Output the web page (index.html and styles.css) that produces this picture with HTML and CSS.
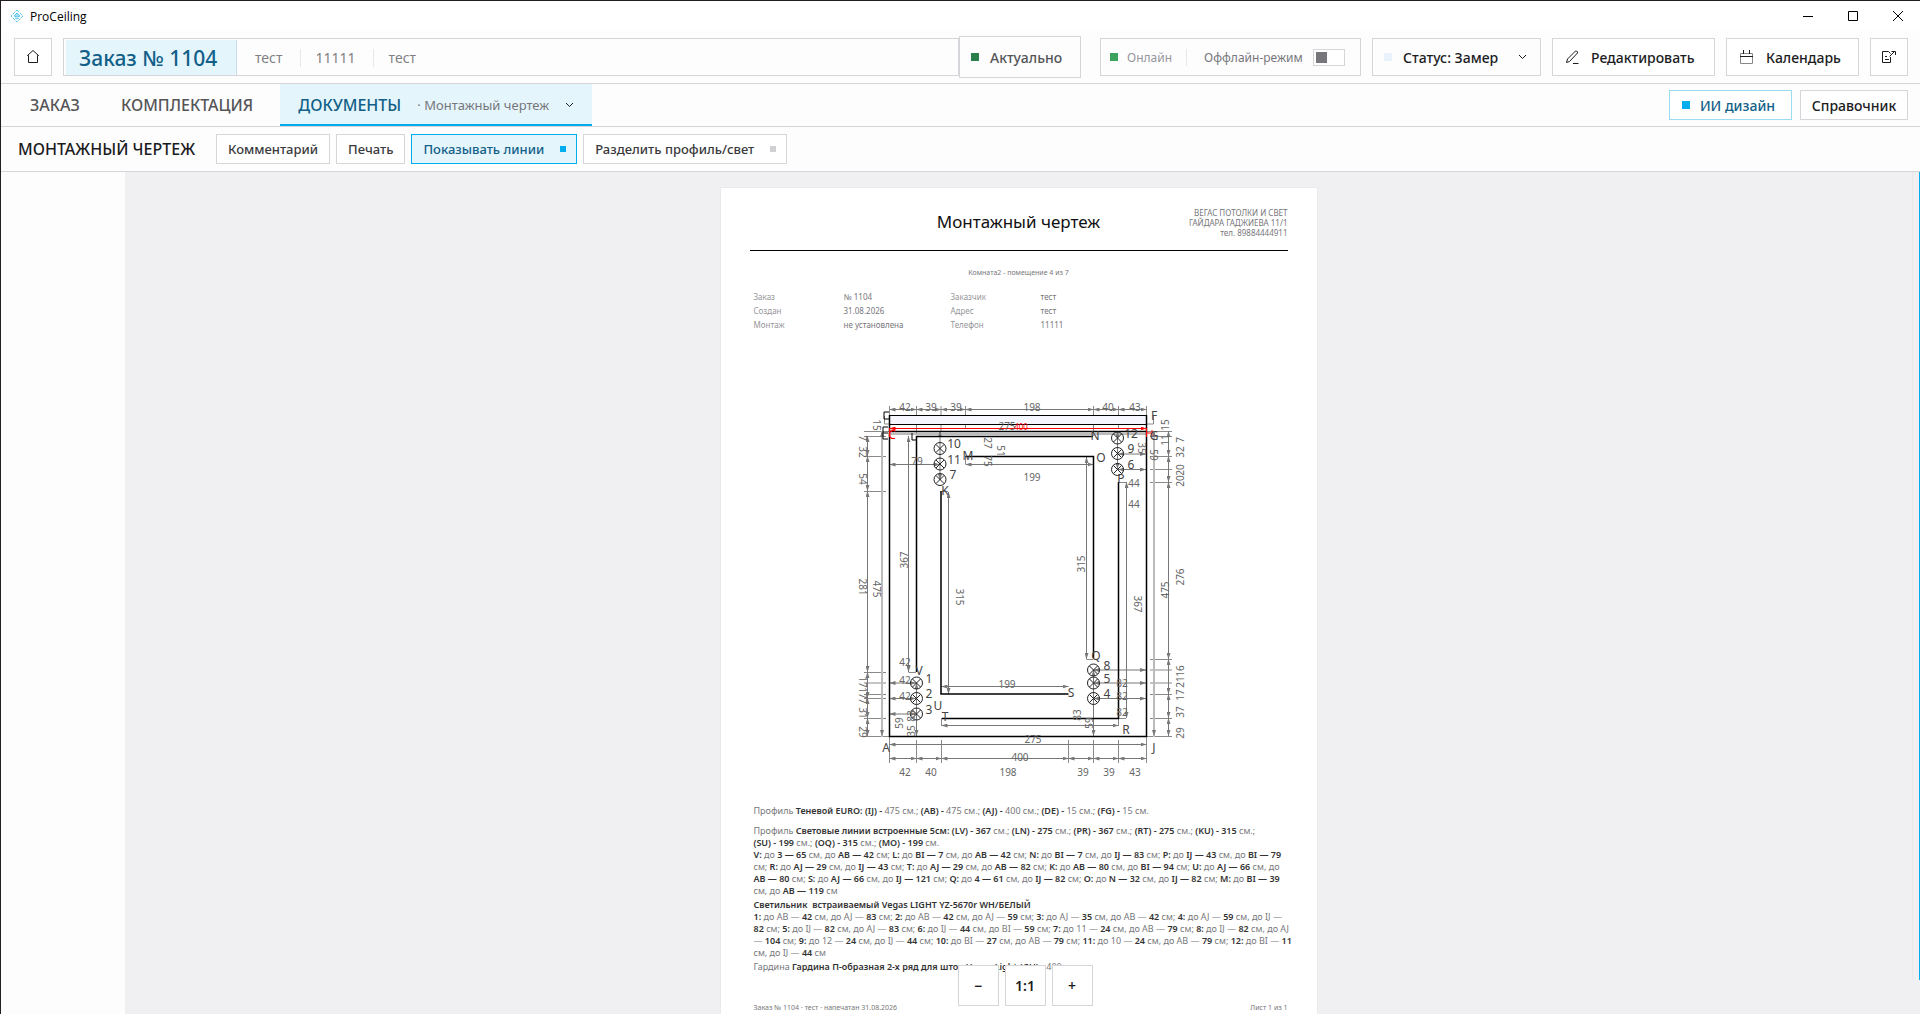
FILE: index.html
```html
<!DOCTYPE html>
<html lang="ru">
<head>
  <meta charset="UTF-8">
  <meta name="viewport" content="width=device-width, initial-scale=1.0">
  <title>ProCeiling</title>
  <link rel="stylesheet" href="styles.css">
</head>
<body>
  <div class="titlebar">
    <svg class="logo" width="14" height="14" viewBox="0 0 14 14">
      <path d="M7 1 L13 7 L7 13 L1 7 Z" stroke-dasharray="3 1"/>
      <path d="M4 7 L7 4 L10 7 L7 8 Z" fill="#a5e0f6"/>
      <path d="M5 9 L7 10 L9 9"/>
    </svg>
    <span class="app-name">ProCeiling</span>
    <div class="window-buttons">
      <button aria-label="Свернуть"><svg width="12" height="12" viewBox="0 0 12 12"><path d="M1 6.5H11"/></svg></button>
      <button aria-label="Развернуть"><svg width="12" height="12" viewBox="0 0 12 12"><path d="M1.5 1.5H10.5V10.5H1.5Z"/></svg></button>
      <button aria-label="Закрыть"><svg width="12" height="12" viewBox="0 0 12 12"><path d="M1 1L11 11M11 1L1 11"/></svg></button>
    </div>
  </div>

  <header class="topbar">
    <button class="btn square home" aria-label="Главная">
      <svg width="14" height="16" viewBox="0 0 14 16"><path d="M2.5 13.5V6.5H1.5L7 1.5L12.5 6.5H11.5V13.5Z"/></svg>
    </button>
    <div class="order">
      <strong>Заказ № 1104</strong>
      <span>тест</span>
      <span>11111</span>
      <span>тест</span>
    </div>
    <div class="actual"><i class="dot dark-green"></i>Актуально</div>
    <div class="online">
      <i class="dot green"></i>
      <span class="net">Онлайн</span>
      <label for="offline">Оффлайн-режим</label>
      <input type="checkbox" id="offline" class="switch">
    </div>
    <div class="status">
      <i class="dot pale"></i>
      <select aria-label="Статус"><option>Статус: Замер</option></select>
      <svg class="chevron" width="9" height="6" viewBox="0 0 9 6"><path d="M1 1L4.5 4.5L8 1"/></svg>
    </div>
    <button class="btn edit">
      <svg width="14" height="15" viewBox="0 0 14 15"><path d="M1.5 12.5L2.5 9L10.5 1H11.5L12.5 2V3L4.5 11.5L1.5 12.5M8 13.5H13.5"/></svg>
      Редактировать
    </button>
    <button class="btn calendar">
      <svg width="15" height="15" viewBox="0 0 15 15"><path d="M1.5 3.5H13.5V13.5H1.5Z" stroke="#888"/><path d="M1 6.5H14M4.5 0V4M10.5 0V4"/></svg>
      Календарь
    </button>
    <button class="btn square" aria-label="Экспорт">
      <svg width="16" height="14" viewBox="0 0 16 14"><path d="M9.5 7V12.5H1.5V1.5H7.5L9.5 3.5M4 6.5H6M4 9.5H8M8.5 6.5L14 1M10.5 1.5H14.5V5"/></svg>
    </button>
  </header>

  <nav class="tabs">
    <a href="#order" class="tab">ЗАКАЗ</a>
    <a href="#kit" class="tab">КОМПЛЕКТАЦИЯ</a>
    <div class="tab active">
      <a href="#docs">ДОКУМЕНТЫ</a>
      <select aria-label="Документ"><option>· Монтажный чертеж</option></select>
      <svg class="chevron" width="9" height="6" viewBox="0 0 9 6"><path d="M1 1L4.5 4.5L8 1"/></svg>
    </div>
    <button class="btn small ai"><i class="dot cyan"></i>ИИ дизайн</button>
    <button class="btn small guide">Справочник</button>
  </nav>

  <div class="toolbar">
    <h1>МОНТАЖНЫЙ ЧЕРТЕЖ</h1>
    <button class="btn small">Комментарий</button>
    <button class="btn small">Печать</button>
    <button class="btn small on">Показывать линии<i class="mark cyan"></i></button>
    <button class="btn small">Разделить профиль/свет<i class="mark"></i></button>
  </div>

  <main class="workspace">
    <aside class="side"></aside>
    <div class="canvas">
      <article class="sheet">
        <div class="sheet-head">
          <h2>Монтажный чертеж</h2>
          <address>ВЕГАС ПОТОЛКИ И СВЕТ<br>ГАЙДАРА ГАДЖИЕВА 11/1<br>тел. 89884444911</address>
        </div>
        <p class="room">Комната2 - помещение 4 из 7</p>
        <table class="info">
          <tr><th>Заказ</th><td>№ 1104</td><th>Заказчик</th><td>тест</td></tr>
          <tr><th>Создан</th><td>31.08.2026</td><th>Адрес</th><td>тест</td></tr>
          <tr><th>Монтаж</th><td>не установлена</td><th>Телефон</th><td>11111</td></tr>
        </table>

        <svg class="plan" viewBox="839 391 360 400">
          <defs>
            <marker id="arrow" viewBox="0 0 6 4" refX="6" refY="2" markerWidth="6" markerHeight="4" markerUnits="userSpaceOnUse" orient="auto-start-reverse"><path d="M0 0L6 2L0 4Z" fill="#777"/></marker>
            <marker id="arrow-red" viewBox="0 0 6 4" refX="6" refY="2" markerWidth="6" markerHeight="4" markerUnits="userSpaceOnUse" orient="auto-start-reverse"><path d="M0 0L6 2L0 4Z" fill="#f00"/></marker>
            <g id="lamp"><circle r="6"/><path d="M-4 -4L4 4M4 -4L-4 4"/></g>
          </defs>

          <!-- extension lines -->
          <path class="tick" d="M889.5 406V425M916.5 406V434M941 406V432M965.5 406V428M1093.5 406V436M1118.5 406V428M1146.5 406V425
            M889.5 737V763M916.5 740V763M941.5 740V763M1068.5 740V763M1093.5 740V763M1118.5 740V763M1146.5 737V763
            M864 431.5H890M864 436.5H886M864 456.5H886M864 491.5H886M864 672.5H886M864 683H886M864 694.5H886M864 698.5H886M864 718.5H886M864 736.5H889
            M1147 431.5H1172M1150 436.5H1172M1150 456.5H1172M1150 469.5H1172M1150 482.5H1172M1150 659.5H1172M1150 670H1172M1150 683H1172M1150 694.5H1172M1150 718.5H1172M1147 736.5H1172
            M908.5 672.5H916M941 491.5H948M1086.5 659.5H1093M1118.5 482.5H1126M1118 718.5H1126M941.5 718V726M965.5 456V464M1118.5 718V726"/>
          <path class="pale-line" d="M882 431V737M1154 431V737M889 434H1147"/>
          <path class="tick" d="M889 424H884.5V416M1147 424H1153.5V416"/>

          <!-- dimension lines -->
          <g class="dim">
            <line x1="889.5" y1="409.5" x2="916.5" y2="409.5"/><line x1="916.5" y1="409.5" x2="941" y2="409.5"/>
            <line x1="941" y1="409.5" x2="965.5" y2="409.5"/><line x1="965.5" y1="409.5" x2="1093.5" y2="409.5"/>
            <line x1="1093.5" y1="409.5" x2="1118.5" y2="409.5"/><line x1="1118.5" y1="409.5" x2="1146.5" y2="409.5"/>
            <line x1="889.5" y1="758.5" x2="916.5" y2="758.5"/><line x1="916.5" y1="758.5" x2="941.5" y2="758.5"/>
            <line x1="941.5" y1="758.5" x2="1068.5" y2="758.5"/><line x1="1068.5" y1="758.5" x2="1093.5" y2="758.5"/>
            <line x1="1093.5" y1="758.5" x2="1118.5" y2="758.5"/><line x1="1118.5" y1="758.5" x2="1146.5" y2="758.5"/>
            <line x1="889.5" y1="744.5" x2="1146.5" y2="744.5"/><line x1="941.5" y1="725.5" x2="1118.5" y2="725.5"/>
            <line x1="941.5" y1="686.5" x2="1068.5" y2="686.5"/><line x1="965.5" y1="464.5" x2="1093.5" y2="464.5"/>
            <line x1="889.5" y1="464.5" x2="940" y2="464.5"/>
            <line x1="867.5" y1="436" x2="867.5" y2="456"/><line x1="867.5" y1="456" x2="867.5" y2="491"/>
            <line x1="867.5" y1="491" x2="867.5" y2="672"/><line x1="867.5" y1="672" x2="867.5" y2="698"/>
            <line x1="867.5" y1="698" x2="867.5" y2="718"/><line x1="867.5" y1="718" x2="867.5" y2="736"/>
            <line x1="1168.5" y1="431" x2="1168.5" y2="456"/><line x1="1168.5" y1="456" x2="1168.5" y2="482"/>
            <line x1="1168.5" y1="482" x2="1168.5" y2="659"/><line x1="1168.5" y1="659" x2="1168.5" y2="694"/>
            <line x1="1168.5" y1="694" x2="1168.5" y2="718"/><line x1="1168.5" y1="718" x2="1168.5" y2="736"/>
            <line x1="908.5" y1="436" x2="908.5" y2="672"/><line x1="948.5" y1="492" x2="948.5" y2="694"/>
            <line x1="1086.5" y1="457" x2="1086.5" y2="659"/><line x1="1126.5" y1="482" x2="1126.5" y2="718"/>
            <line x1="889.5" y1="683" x2="916" y2="683"/><line x1="889.5" y1="698.5" x2="916" y2="698.5"/><line x1="889.5" y1="714" x2="916" y2="714"/>
            <line x1="1093.5" y1="670" x2="1146" y2="670"/><line x1="1093.5" y1="683" x2="1146" y2="683"/><line x1="1093.5" y1="698.5" x2="1146" y2="698.5"/>
            <line x1="1118" y1="454" x2="1146" y2="454"/><line x1="1118" y1="469.5" x2="1146" y2="469.5"/>
            <line x1="916.5" y1="683" x2="916.5" y2="736"/><line x1="1093.5" y1="670" x2="1093.5" y2="736"/>
            <line x1="940" y1="431" x2="940" y2="480"/><line x1="1117.5" y1="431" x2="1117.5" y2="469"/>
          </g>
          <g class="dim pale-dim">
            <line x1="882" y1="431" x2="882" y2="736"/><line x1="1154" y1="431" x2="1154" y2="736"/>
          </g>

          <!-- profile and light lines -->
          <path class="curtain" d="M889.5 415.5H1146.5V424.5H889.5Z"/>
          <path class="wall" d="M889.5 415V736.5H1146.5V415M889.5 431.5H1146.5"/>
          <path class="wall" d="M916.5 672V436.5H1093M941 491V694H1068.5M965.5 456.5H1093.5V658M1118.5 482V718.5H942"/>
          <path class="wall thin" d="M889 412H884V419H889M888 427H883V433H888M883 433V439H888M912 433V440H916"/>
          <line class="red" x1="889.5" y1="428.5" x2="1146.5" y2="428.5"/>
          <path class="red-thin" d="M1146.5 428V437M1146.5 433H1152M1152 430V436M889.5 428V437"/>

          <g class="lamps">
            <use href="#lamp" x="940" y="448.5"/><use href="#lamp" x="940" y="464"/><use href="#lamp" x="940" y="479.5"/>
            <use href="#lamp" x="1117.5" y="438"/><use href="#lamp" x="1117.5" y="453.5"/><use href="#lamp" x="1117.5" y="469.5"/>
            <use href="#lamp" x="916.5" y="683"/><use href="#lamp" x="916.5" y="698.5"/><use href="#lamp" x="916.5" y="714"/>
            <use href="#lamp" x="1093.5" y="670"/><use href="#lamp" x="1093.5" y="683"/><use href="#lamp" x="1093.5" y="698.5"/>
          </g>

          <g class="num">
            <text x="905" y="411">42</text><text x="931" y="411">39</text><text x="956" y="411">39</text>
            <text x="1032" y="411">198</text><text x="1108" y="411">40</text><text x="1135" y="411">43</text>
            <text x="1007" y="430">275</text><text x="917" y="465">79</text><text x="1032" y="481">199</text>
            <text x="1134" y="487">44</text><text x="1134" y="508">44</text>
            <text x="905" y="666">42</text><text x="905" y="684">42</text><text x="905" y="700">42</text>
            <text x="1122" y="687">82</text><text x="1122" y="700">82</text><text x="1122" y="716">82</text>
            <text x="1007" y="688">199</text><text x="1033" y="743">275</text><text x="1020" y="761">400</text>
            <text x="905" y="776">42</text><text x="931" y="776">40</text><text x="1008" y="776">198</text>
            <text x="1083" y="776">39</text><text x="1109" y="776">39</text><text x="1135" y="776">43</text>
          </g>
          <g class="num">
            <text transform="translate(873 425) rotate(90)">15</text><text transform="translate(859 438) rotate(90)">7</text>
            <text transform="translate(859 452) rotate(90)">32</text><text transform="translate(859 479) rotate(90)">54</text>
            <text transform="translate(859 587) rotate(90)">281</text><text transform="translate(873 589) rotate(90)">475</text>
            <text transform="translate(859 682) rotate(90)">17</text><text transform="translate(859 693) rotate(90)">17</text>
            <text transform="translate(859 701) rotate(90)">7</text><text transform="translate(859 713) rotate(90)">31</text>
            <text transform="translate(859 732) rotate(90)">29</text><text transform="translate(984 443) rotate(90)">27</text>
            <text transform="translate(984 461) rotate(90)">75</text><text transform="translate(997 451) rotate(90)">51</text>
            <text transform="translate(956 597) rotate(90)">315</text><text transform="translate(1134 604) rotate(90)">367</text>
            <text transform="translate(1138 448) rotate(90)">35</text><text transform="translate(1150 455) rotate(90)">59</text>
            <text transform="translate(908 560) rotate(-90)">367</text><text transform="translate(1085 564) rotate(-90)">315</text>
            <text transform="translate(1169 590) rotate(-90)">475</text><text transform="translate(1184 577) rotate(-90)">276</text>
            <text transform="translate(1169 425) rotate(-90)">15</text><text transform="translate(1169 440) rotate(-90)">11</text>
            <text transform="translate(1184 440) rotate(-90)">7</text><text transform="translate(1184 452) rotate(-90)">32</text>
            <text transform="translate(1184 470) rotate(-90)">20</text><text transform="translate(1184 481) rotate(-90)">20</text>
            <text transform="translate(1184 671) rotate(-90)">16</text><text transform="translate(1184 682) rotate(-90)">21</text>
            <text transform="translate(1184 695) rotate(-90)">17</text><text transform="translate(1184 712) rotate(-90)">37</text>
            <text transform="translate(1184 733) rotate(-90)">29</text><text transform="translate(903 723) rotate(-90)">59</text>
            <text transform="translate(915 716) rotate(-90)">83</text><text transform="translate(915 731) rotate(-90)">35</text>
            <text transform="translate(1081 715) rotate(-90)">83</text><text transform="translate(1093 723) rotate(-90)">59</text>
          </g>
          <g class="name">
            <text x="954" y="448">10</text><text x="954" y="464">11</text><text x="953" y="479">7</text>
            <text x="1131" y="438">12</text><text x="1131" y="453">9</text><text x="1131" y="469">6</text>
            <text x="929" y="683">1</text><text x="929" y="698">2</text><text x="929" y="714">3</text>
            <text x="1107" y="670">8</text><text x="1107" y="683">5</text><text x="1107" y="698">4</text>
            <text x="968" y="460">M</text><text x="945" y="495">K</text><text x="1095" y="440">N</text>
            <text x="1101" y="462">O</text><text x="1121" y="483">P</text><text x="1096" y="660">Q</text>
            <text x="1071" y="697">S</text><text x="1126" y="734">R</text><text x="1154" y="752">J</text>
            <text x="886" y="752">A</text><text x="919" y="675">V</text><text x="938" y="710">U</text>
            <text x="945" y="721">T</text><text x="1154" y="420">F</text><text x="1154" y="440">G</text>
            <text class="red-text" x="892" y="439">C</text>
          </g>
          <text class="red-label" x="1021" y="430">400</text>
        </svg>

        <div class="specs">
          <p>Профиль <b>Теневой EURO: (IJ) - </b>475 см.; <b>(AB) -</b> 475 см.; <b>(AJ) -</b> 400 см.; <b>(DE) -</b> 15 см.; <b>(FG) -</b> 15 см.</p>
          <p class="light">Профиль <b>Световые линии встроенные 5см: (LV) - 367</b> см.; <b>(LN) - 275</b> см.; <b>(PR) - 367</b> см.; <b>(RT) - 275</b> см.; <b>(KU) - 315</b> см.;<br>
            <b>(SU) - 199</b> см.; <b>(OQ) - 315</b> см.; <b>(MO) - 199</b> см.<br>
            <b>V:</b> до <b>3 — 65</b> см, до <b>AB — 42</b> см; <b>L:</b> до <b>BI — 7</b> см, до <b>AB — 42</b> см; <b>N:</b> до <b>BI — 7</b> см, до <b>IJ — 83</b> см; <b>P:</b> до <b>IJ — 43</b> см, до <b>BI — 79</b><br>
            см; <b>R:</b> до <b>AJ — 29</b> см, до <b>IJ — 43</b> см; <b>T:</b> до <b>AJ — 29</b> см, до <b>AB — 82</b> см; <b>K:</b> до <b>AB — 80</b> см, до <b>BI — 94</b> см; <b>U:</b> до <b>AJ — 66</b> см, до<br>
            <b>AB — 80</b> см; <b>S:</b> до <b>AJ — 66</b> см, до <b>IJ — 121</b> см; <b>Q:</b> до <b>4 — 61</b> см, до <b>IJ — 82</b> см; <b>O:</b> до <b>N — 32</b> см, до <b>IJ — 82</b> см; <b>M:</b> до <b>BI — 39</b><br>
            см, до <b>AB — 119</b> см</p>
          <p><b>Светильник&nbsp; встраиваемый Vegas LIGHT YZ-5670r WH/БЕЛЫЙ</b><br>
            <b>1:</b> до AB — <b>42</b> см, до AJ — <b>83</b> см; <b>2:</b> до AB — <b>42</b> см, до AJ — <b>59</b> см; <b>3:</b> до AJ — <b>35</b> см, до AB — <b>42</b> см; <b>4:</b> до AJ — <b>59</b> см, до IJ —<br>
            <b>82</b> см; <b>5:</b> до IJ — <b>82</b> см, до AJ — <b>83</b> см; <b>6:</b> до IJ — <b>44</b> см, до BI — <b>59</b> см; <b>7:</b> до 11 — <b>24</b> см, до AB — <b>79</b> см; <b>8:</b> до IJ — <b>82</b> см, до AJ<br>
            — <b>104</b> см; <b>9:</b> до 12 — <b>24</b> см, до IJ — <b>44</b> см; <b>10:</b> до BI — <b>27</b> см, до AB — <b>79</b> см; <b>11:</b> до 10 — <b>24</b> см, до AB — <b>79</b> см; <b>12:</b> до BI — <b>11</b><br>
            см, до IJ — <b>44</b> см</p>
          <p>Гардина <b>Гардина П-образная 2-х ряд для штор Vegas Light (GH)</b> - 400</p>
        </div>
        <footer><span>Заказ № 1104 · тест · напечатан 31.08.2026</span><span>Лист 1 из 1</span></footer>
      </article>
      <div class="zoom">
        <button aria-label="Уменьшить">−</button>
        <button>1:1</button>
        <button aria-label="Увеличить">+</button>
      </div>
    </div>
    <div class="scroll"></div>
  </main>
</body>
</html>
```
FILE: styles.css
```css
* {
  box-sizing: border-box;
}
body {
  font-family: "Noto Sans", "Open Sans", sans-serif;
  font-size: 14px;
  color: #1c1c1e;
  background: #fdfdfe;
  margin: 0;
  height: 100vh;
  overflow: hidden;
  display: flex;
  flex-direction: column;
  border-top: 1px solid #231f20;
  border-left: 1px solid #231f20;
}
button, select, input {
  font: inherit;
  color: inherit;
  margin: 0;
}
svg {
  fill: none;
  stroke: #1c1c1e;
  flex: none;
}
a {
  color: inherit;
  text-decoration: none;
}

/* window title */
.titlebar {
  display: flex;
  align-items: center;
  height: 30px;
  padding-left: 9px;
  background: #fff;
}
.logo {
  stroke: #5cc4ec;
}
.app-name {
  font-family: "Open Sans", sans-serif;
  font-size: 12px;
  color: #000;
  margin-left: 6px;
}
.window-buttons {
  margin-left: auto;
  display: flex;
}
.window-buttons button {
  width: 45px;
  height: 28px;
  padding: 0;
  border: 0;
  background: none;
}
.window-buttons svg {
  stroke: #000;
}

/* order header */
.topbar {
  display: flex;
  align-items: center;
  height: 53px;
  padding: 0 12px 0 13px;
  border-bottom: 1px solid #d6d6da;
}
.btn {
  display: flex;
  align-items: center;
  justify-content: center;
  height: 38px;
  padding: 0 12px;
  border: 1px solid #d6d6da;
  background: #fff;
  font-weight: 500;
  white-space: nowrap;
}
.square {
  width: 38px;
  padding: 0;
}
.home {
  margin-right: 11px;
}
.order {
  flex: 1;
  display: flex;
  align-items: center;
  height: 38px;
  padding: 1px 2px 0;
  border: 1px solid #d6d6da;
  color: #808084;
}
.order strong {
  align-self: stretch;
  display: flex;
  align-items: center;
  width: 171px;
  padding-left: 13px;
  font-size: 21px;
  font-weight: 500;
  color: #125f88;
  background: #e4f5fc;
  border-right: 1px solid #c9dbe4;
}
.order span {
  padding: 0 17px 0 18px;
  line-height: 18px;
}
.order span + span {
  padding-left: 15px;
  border-left: 1px solid #e8e8ea;
}
.dot {
  width: 8px;
  height: 8px;
  flex: none;
}
.dark-green { background: #2c7d4d; }
.green { background: #3ba35e; }
.pale { background: #eaf3fc; }
.cyan { background: #00aeef; }
.actual {
  display: flex;
  align-items: center;
  gap: 11px;
  width: 122px;
  height: 42px;
  padding-left: 11px;
  border: 1px solid #d6d6da;
  color: #555558;
  font-weight: 500;
}
.online {
  display: flex;
  align-items: center;
  width: 261px;
  height: 38px;
  margin-left: 19px;
  padding: 0 15px 0 9px;
  border: 1px solid #d6d6da;
  font-size: 12px;
  color: #77777b;
}
.net {
  margin-left: 9px;
  color: #97979b;
}
.online label {
  flex: 1;
  margin-left: 14px;
  padding-left: 17px;
  border-left: 1px solid #e8e8ea;
  white-space: nowrap;
}
.switch {
  appearance: none;
  width: 32px;
  height: 17px;
  padding: 2px;
  border: 1px solid #d6d6da;
  background: #fff;
}
.switch::before {
  content: "";
  display: block;
  width: 11px;
  height: 11px;
  background: #77777b;
}
.status {
  display: flex;
  align-items: center;
  width: 169px;
  height: 38px;
  margin: 0 11px;
  padding: 0 13px 0 11px;
  border: 1px solid #d6d6da;
  font-weight: 500;
}
.status select, .tab select {
  appearance: none;
  flex: 1;
  min-width: 0;
  padding: 0;
  border: 0;
  background: none;
}
.status select {
  margin-left: 11px;
}
.edit, .calendar {
  justify-content: flex-start;
  gap: 12px;
  margin-right: 11px;
}
.edit {
  width: 163px;
}
.calendar {
  width: 133px;
}

/* section tabs */
.tabs {
  display: flex;
  align-items: center;
  height: 43px;
  padding-right: 12px;
  border-bottom: 1px solid #d6d6da;
}
.tab {
  font-size: 16px;
  font-weight: 500;
  color: #555558;
  padding-left: 29px;
}
.tab + .tab {
  padding-left: 41px;
}
.tabs .active {
  display: flex;
  align-items: center;
  width: 312px;
  height: 42px;
  margin-left: 27px;
  padding: 2px 18px 0;
  color: #125f88;
  background: #e4f5fc;
  border-bottom: 2px solid #00aeef;
}
.tab select {
  margin-left: 16px;
  font-size: 13px;
  font-weight: 400;
  color: #77777b;
}
.small {
  height: 30px;
}
.ai {
  width: 123px;
  gap: 10px;
  margin-left: auto;
  margin-right: 8px;
  padding-right: 16px;
  color: #125f88;
  border-color: #9bdcf3;
}
.guide {
  width: 108px;
}

/* document tools */
.toolbar {
  display: flex;
  align-items: center;
  gap: 6px;
  height: 45px;
  padding-left: 17px;
  border-bottom: 1px solid #d6d6da;
}
.toolbar h1 {
  margin: 0 15px 0 0;
  font-size: 16px;
  font-weight: 500;
}
.toolbar .btn {
  padding: 0 11px;
  font-size: 13px;
  color: #3a3a3c;
}
.toolbar .on {
  color: #125f88;
  background: #e4f5fc;
  border-color: #00aeef;
}
.mark {
  width: 6px;
  height: 6px;
  margin-left: 16px;
  margin-right: -1px;
  background: #d0d0d4;
}
.mark.cyan {
  background: #00aeef;
}

.workspace {
  flex: 1;
  min-height: 0;
  display: flex;
  background: #f0f0f2;
}
.side {
  width: 124px;
  background: #fdfdfe;
}
.canvas {
  position: relative;
  flex: 1;
  overflow: hidden;
  padding-top: 15px;
}
.scroll {
  width: 8px;
  margin-bottom: 34px;
  border-left: 1px solid #e9e9eb;
  border-right: 1px solid #00aeef;
}

/* paper sheet */
.sheet {
  max-width: 598px;
  min-height: 842px;
  margin: 0 auto;
  padding: 20px 29px 16px;
  background: #fff;
  border: 1px solid #eaeaec;
  font-size: 9px;
  line-height: 12px;
  color: #77777b;
}
.sheet-head {
  display: grid;
  grid-template-columns: 1fr auto 1fr;
  height: 43px;
  border-bottom: 1px solid #000;
}
.sheet h2 {
  grid-column: 2;
  margin: 0;
  font-size: 17px;
  font-weight: 400;
  line-height: 28px;
  color: #111;
}
.sheet address {
  text-align: right;
  font-size: 8px;
  font-style: normal;
  line-height: 10px;
}
.room {
  margin: 16px 0 11px;
  text-align: center;
  font-size: 7px;
}
.info {
  border-collapse: collapse;
  margin-left: 4px;
  font-size: 8px;
}
.info th, .info td {
  padding: 1px 0;
  text-align: left;
  font-weight: 400;
}
.info th {
  width: 90px;
  color: #97979b;
}
.info td {
  width: 107px;
}
.info td:last-child {
  width: 90px;
}
.plan {
  display: block;
  width: 360px;
  height: 400px;
  margin: 59px auto 14px;
}
.tick {
  stroke: #8a8a8a;
}
.pale-line {
  stroke: #bbb;
  stroke-width: 2;
}
.dim {
  stroke: #777;
}
.pale-dim {
  stroke: #bbb;
}
.dim line {
  marker-start: url(#arrow);
  marker-end: url(#arrow);
}
marker path {
  stroke: none;
}
.wall {
  stroke: #000;
  stroke-width: 1.5;
}
.thin {
  stroke-width: 1;
}
.curtain {
  stroke: #000;
  fill: #f6f6fe;
}
.red {
  stroke: #f00;
  marker-start: url(#arrow-red);
  marker-end: url(#arrow-red);
}
.red-thin {
  stroke: #f00;
}
.lamps {
  stroke: #222;
}
.plan text {
  stroke: none;
  fill: #666;
  text-anchor: middle;
}
.num {
  font-size: 10px;
}
.name {
  font-size: 12px;
}
.plan .name text {
  fill: #444;
}
.plan .name .red-text, .plan .red-label {
  fill: #f00;
}
.red-label {
  font-size: 8px;
}
.specs {
  margin-left: 4px;
  white-space: nowrap;
}
.specs p {
  margin: 0 0 2px;
}
.specs .light {
  margin-top: 8px;
}
.specs b {
  font-weight: 600;
  color: #333;
}
.sheet footer {
  display: flex;
  justify-content: space-between;
  margin: 30px 0 0 4px;
  font-size: 7px;
  line-height: 10px;
}

.zoom {
  position: absolute;
  left: 50%;
  bottom: 8px;
  margin-left: -61px;
  display: flex;
  gap: 6px;
}
.zoom button {
  width: 41px;
  height: 41px;
  padding: 0;
  border: 1px solid #d6d6da;
  background: #fff;
  font-size: 14px;
  font-weight: 600;
}
```
